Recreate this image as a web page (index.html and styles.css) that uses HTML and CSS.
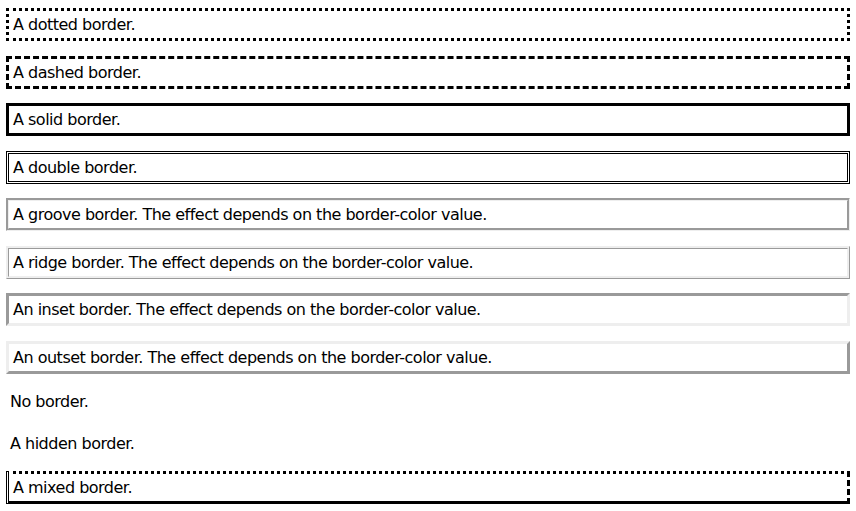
FILE: index.html
```
<html>
	<head>
		<link rel="stylesheet" href="styles.css">
	</head>
	<body>
		<p class="dotted">A dotted border.</p>
		<p class="dashed">A dashed border.</p>
		<p class="solid">A solid border.</p>
		<p class="double">A double border.</p>
		<p class="groove">A groove border. The effect depends on the border-color value.</p>
		<p class="ridge">A ridge border. The effect depends on the border-color value.</p>
		<p class="inset">An inset border. The effect depends on the border-color value.</p>
		<p class="outset">An outset border. The effect depends on the border-color value.</p>
		<p class="none">No border.</p>
		<p class="hidden">A hidden border.</p>
		<p class="mix">A mixed border.</p>
	</body>
</html>
```

FILE: styles.css
```
body {
	margin: 8px 6px;
	font-family: "DejaVu Sans", Verdana, sans-serif;
	font-size: 16px;
	letter-spacing: -0.5px;
	color: black;
}
p {
	margin: 0 0 14.5px 0;
	padding: 4px;
	line-height: 19px;
	border-width: 3px;
}
p.dotted {border-style: dotted;}
p.dashed {border-style: dashed;}
p.solid {border-style: solid;}
p.double {border-style: double;}
p.groove {border-style: groove;}
p.ridge {border-style: ridge;}
p.inset {border-style: inset;}
p.outset {border-style: outset;}
p.none {border-style: none;}
p.hidden {border-style: hidden;}
p.mix {border-style: dotted dashed solid double;}
```
